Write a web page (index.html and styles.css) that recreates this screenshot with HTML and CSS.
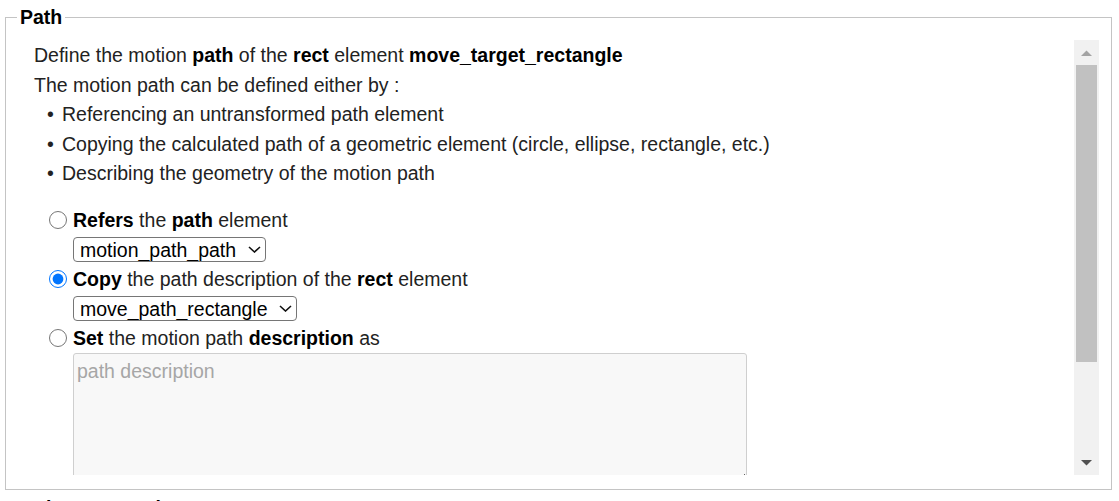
FILE: index.html
```html
<!DOCTYPE html>
<html lang="en">
<head>
<meta charset="utf-8">
<title>Path</title>
<link rel="stylesheet" href="styles.css">
</head>
<body>
<div class="page">
  <fieldset class="panel">
    <legend class="panel-title">Path</legend>
    <div class="viewport">
      <div class="scroller">
        <div class="content">
          <p class="line">Define the motion <b>path</b> of the <b>rect</b> element <b>move_target_rectangle</b></p>
          <p class="line">The motion path can be defined either by :</p>
          <ul class="ways">
            <li class="line">Referencing an untransformed path element</li>
            <li class="line">Copying the calculated path of a geometric element (circle, ellipse, rectangle, etc.)</li>
            <li class="line">Describing the geometry of the motion path</li>
          </ul>
          <div class="choices">
            <label class="choice"><input class="radio" type="radio" name="mode"><span><b>Refers</b> the <b>path</b> element</span></label>
            <div class="sub"><select class="picker"><option>motion_path_path</option></select></div>
            <label class="choice"><input class="radio" type="radio" name="mode" checked><span><b>Copy</b> the path description of the <b>rect</b> element</span></label>
            <div class="sub"><select class="picker"><option>move_path_rectangle</option></select></div>
            <label class="choice"><input class="radio" type="radio" name="mode"><span><b>Set</b> the motion path <b>description</b> as</span></label>
            <div class="area-wrap"><textarea class="desc" placeholder="path description" readonly></textarea></div>
          </div>
        </div>
      </div>
      <div class="vbar" aria-hidden="true">
        <div class="vbar-btn">
          <svg class="vbar-arrow" viewBox="0 0 11 6" width="11" height="6"><path d="M0 6L5.5 0.5L11 6z" fill="#a3a3a3"/></svg>
        </div>
        <div class="vbar-track"><div class="vbar-thumb"></div></div>
        <div class="vbar-btn">
          <svg class="vbar-arrow" viewBox="0 0 11 6" width="11" height="6"><path d="M0 0L5.5 5.5L11 0z" fill="#505050"/></svg>
        </div>
      </div>
    </div>
  </fieldset>
  <fieldset class="panel next">
    <legend class="panel-title">Animate over time</legend>
  </fieldset>
</div>
</body>
</html>
```

FILE: styles.css
```css
html {
  overflow: hidden;
}

body {
  margin: 0;
  background: #fff;
  font-family: "Liberation Sans", Arial, sans-serif;
  font-size: 19.5px;
  color: #222;
}

b {
  color: #000;
}

.page {
  padding: 6px 7px 0 5px;
}

.panel {
  margin: 0;
  border: 1px solid #c4c4c4;
  padding: 12px 12px 14px 11px;
  min-width: 0;
}

.panel-title {
  padding: 0 3px;
  font-weight: bold;
  color: #000;
  line-height: 22px;
}

.next {
  margin-top: 7px;
}

.viewport {
  display: flex;
  height: 435px;
}

.scroller {
  flex: 1;
  min-width: 0;
  overflow: hidden;
}

.vbar {
  width: 25px;
  flex: none;
  display: flex;
  flex-direction: column;
  background: #f1f1f1;
}

.vbar-btn {
  height: 25px;
  flex: none;
  display: flex;
  align-items: center;
  justify-content: center;
}

.vbar-arrow {
  display: block;
}

.vbar-track {
  flex: 1;
  padding: 0 2px;
}

.vbar-thumb {
  height: 297px;
  background: #c1c1c1;
}

.content {
  padding: 1px 0 0 17px;
}

.line {
  margin: 0;
  line-height: 29.5px;
  white-space: nowrap;
}

.ways {
  list-style: none;
  margin: 0 0 17px 0;
  padding: 0;
}

.ways li::before {
  content: "\2022";
  display: inline-block;
  width: 15px;
  margin-left: 13px;
}

.choices {
  display: flex;
  flex-direction: column;
}

.choice {
  display: flex;
  align-items: center;
  height: 29.5px;
  line-height: 22px;
  white-space: nowrap;
}

.radio {
  width: 18px;
  height: 18px;
  margin: 0 6px 0 15px;
}

.sub {
  display: flex;
  align-items: center;
  height: 29.5px;
  padding-left: 39px;
}

.picker {
  appearance: none;
  -webkit-appearance: none;
  box-sizing: border-box;
  height: 25px;
  margin: 0;
  padding: 0 28px 0 6px;
  border: 1px solid #767676;
  border-radius: 4px;
  font-family: "Liberation Sans", Arial, sans-serif;
  font-size: 19.5px;
  line-height: 22px;
  color: #000;
  background: #fff url("data:image/svg+xml,%3Csvg xmlns='http://www.w3.org/2000/svg' viewBox='0 0 13 7'%3E%3Cpath d='M1 1L6.5 6L12 1' fill='none' stroke='%23111' stroke-width='1.6'/%3E%3C/svg%3E") no-repeat right 4px center / 13px 7px;
}

.area-wrap {
  padding: 0 0 0 39px;
}

.desc {
  display: block;
  box-sizing: border-box;
  width: 674px;
  height: 130px;
  margin: 0;
  padding: 6px 3px 2px;
  border: 1px solid #cfcfcf;
  border-radius: 3px;
  background: #f8f8f8;
  font-family: "Liberation Sans", Arial, sans-serif;
  font-size: 19.5px;
  line-height: 22px;
  color: #222;
  resize: both;
}

.desc::placeholder {
  color: #a6a6a6;
}
```
